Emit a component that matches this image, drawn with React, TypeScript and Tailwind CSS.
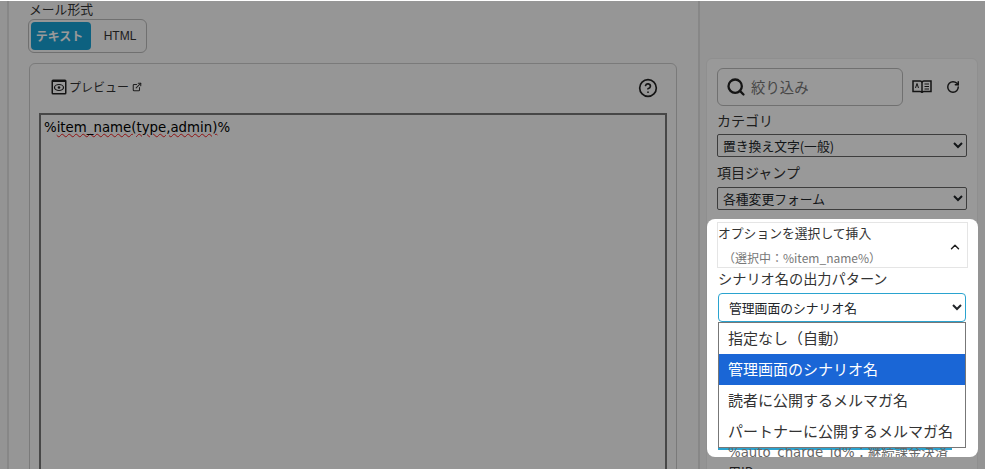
import { Search, RotateCw, ChevronUp, ExternalLink, CircleHelp } from 'lucide-react';

const font = "font-['Noto_Sans_CJK_JP','Noto_Sans',sans-serif]";

const options = ['指定なし（自動）', '管理画面のシナリオ名', '読者に公開するメルマガ名', 'パートナーに公開するメルマガ名'];

const App = () => {
    return (
        <div className={`h-[469px] w-[985px] overflow-hidden flex bg-[#f7f7f7] border-t border-[#ffffff] text-[#212529] ${font}`}>
            {/* Left column */}
            <div className="w-[693px] shrink-0 ml-[7px] pl-[20px] pr-[21px] border-l-2 border-r-2 border-[#e2e2e2] bg-[#fafafa]">
                <div className="text-[12.8px] leading-[18px] -mt-[1px] text-[#333]">メール形式</div>
                <div className="mt-[1px] -ml-[1px] w-[119px] h-[34px] border border-[#bbb] rounded-[6px] p-[2px] flex items-center">
                    <div className="w-[60px] h-[28px] pr-[3px] rounded-[4px] bg-[#17a2d6] text-white text-[12px] font-bold flex items-center justify-center">テキスト</div>
                    <div className="flex-1 pl-[5px] text-center text-[12px] font-['Liberation_Sans'] text-[#333]">HTML</div>
                </div>

                {/* Preview card */}
                <div className="mt-[10px] h-[430px] border border-[#ccc] rounded-[6px] px-[9px]">
                    <div className="h-[49px] flex items-center justify-between">
                        <div className="flex items-center ml-[12px] mt-[-3px] text-[12px] text-[#333]">
                            <svg width="16" height="16" viewBox="0 0 16 16" className="mr-[2px]">
                                <rect x="0.5" y="0.5" width="15" height="15" rx="1.5" fill="#222" />
                                <rect x="2" y="3" width="12" height="11" fill="#fff" />
                                <ellipse cx="8" cy="8.5" rx="4.500" ry="3" fill="none" stroke="#222" strokeWidth="1.2" />
                                <circle cx="8" cy="8.500" r="1.3" fill="#222" />
                            </svg>
                            プレビュー
                            <ExternalLink size={10} strokeWidth={2.5} className="ml-[3px]" />
                        </div>
                        <CircleHelp size={20} strokeWidth={2} className="mr-[9px] mt-[-2px] text-[#222]" />
                    </div>
                    <div className="h-[380px] border-2 border-[#777] bg-[#fafafa] px-[3px] py-[3px] text-[13.33px] leading-[20px] text-black font-['DejaVu_Sans',sans-serif]">
                        %<span className="underline decoration-wavy decoration-[#f02020] decoration-1">item_name(type,admin)</span>%
                    </div>
                </div>
            </div>

            {/* Right panel */}
            <div className="ml-[6px] mt-[57px] w-[272px] h-[500px] border border-[#eee] rounded-[6px] px-[10px] pt-[9px] bg-[#ffffff]">
                <div className="flex items-center">
                    <div className="w-[186px] h-[38px] border border-[#bbb] rounded-[6px] flex items-center pl-[8px]">
                        <Search size={20} strokeWidth={2.75} className="text-[#222]" />
                        <span className="ml-[5px] text-[14.4px] text-[#777]">絞り込み</span>
                    </div>
                    <svg width="20" height="16" viewBox="0 0 20 16" fill="none" stroke="#222" strokeWidth="1.5" className="ml-[9px]">
                        <path d="M1 2h7c1 0 2 .6 2 2v10c0-1-1-1.600-2-1.600H1zM19 2h-7c-1 0-2 .6-2 2v10c0-1 1-1.600 2-1.600h7z" />
                        <path d="M3.500 9l1.500-4.500L6.500 9M12.500 5h4.500M12.500 7.500h4.500M12.500 10h4.500" strokeWidth="1" />
                    </svg>
                    <RotateCw size={14} strokeWidth={2.5} className="ml-[14px] text-[#222]" />
                </div>
                <div className="mt-[4px] text-[14px] leading-[20px] text-[#333]">カテゴリ</div>
                <select defaultValue="a" className="mt-[4px] block w-[250px] h-[23px] border border-[#666] rounded-[2px] bg-white text-[12.8px] pl-[1px]">
                    <option value="a">置き換え文字(一般)</option>
                </select>
                <div className="mt-[5px] text-[14px] leading-[20px] text-[#333]">項目ジャンプ</div>
                <select defaultValue="a" className="mt-[5px] block w-[250px] h-[23px] border border-[#666] rounded-[2px] bg-white text-[12.8px] pl-[1px]">
                    <option value="a">各種変更フォーム</option>
                </select>

                {/* Highlighted block */}
                <div className="relative overflow-hidden mt-[9px] -mx-[10px] h-[238px] w-[271px] bg-white rounded-[8px] shadow-[0_0_0_1000px_rgba(0,0,0,0.4)] px-[10px] pt-[3px]">
                    <div className="h-[46px] border border-[#e5e5e5] flex items-start justify-between pr-[5px] pt-[1px]">
                        <div>
                            <div className="text-[12.8px] leading-[18px] text-[#333]">オプションを選択して挿入</div>
                            <div className="text-[12px] leading-[18px] mt-[7px] ml-[5px] text-[#777]">（選択中：%item_name%）</div>
                        </div>
                        <ChevronUp size={14} strokeWidth={2.5} className="mt-[16px] text-[#222]" />
                    </div>
                    <div className="pl-[1px] h-[23px] text-[14.2px] leading-[20px] text-[#333]">シナリオ名の出力パターン</div>
                    <select defaultValue="a" className="mt-[2px] ml-[1px] block w-[248px] h-[29px] border border-[#2aa3cf] rounded-[4px] bg-white text-[12.8px] pl-[6px]">
                        <option value="a">管理画面のシナリオ名</option>
                    </select>
                    <div className="mt-[126px] ml-[1px] w-[234px] border-t-2 border-[#2aa3cf] pl-[10px] text-[13.33px] leading-[6px] text-[#666] whitespace-nowrap font-['DejaVu_Sans','Noto_Sans_CJK_JP',sans-serif]">%auto_charge_id%：継続課金決済</div>

                    {/* Open select list */}
                    <div className="absolute left-[11px] top-[103px] w-[248px] border border-[#777] bg-white text-[15px] text-[#333]">
                        {options.map((o, i) => (
                            <div key={o} className={`h-[31px] pl-[9px] flex items-center ${i === 1 ? 'bg-[#1a66d6] text-white' : ''}`}>{o}</div>
                        ))}
                    </div>
                </div>
                <div className="mt-[6px] pl-[11px] text-[13px] leading-[18px] text-[#333]">用ID</div>
            </div>
        </div>
    );
};

export default App;
